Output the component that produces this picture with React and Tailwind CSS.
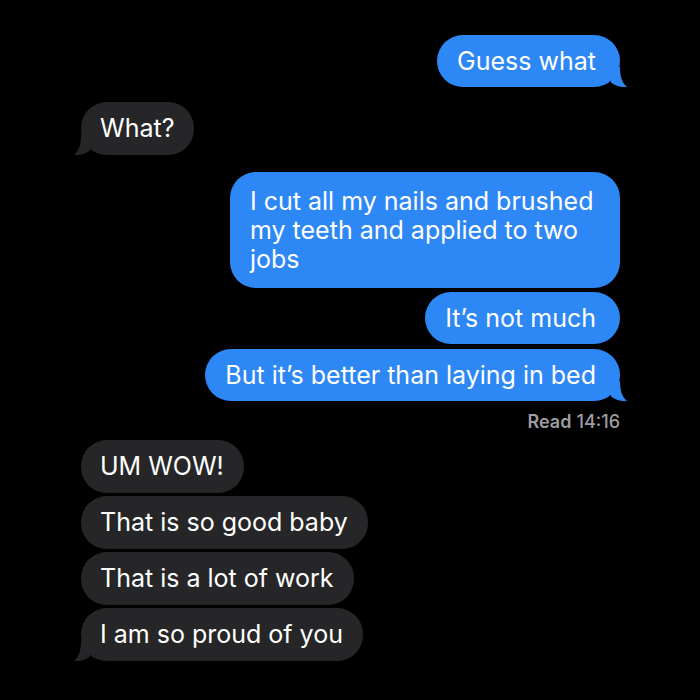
import React from 'react';

const BLUE = '#2d87f5';
const GRAY = '#262628';

const Tail = ({ side, color }) => {
    // little iMessage horn on the bottom corner of the last bubble in a group
    if (side === 'right') {
        return (
            <svg className="absolute bottom-0 -right-[7px]" width="20" height="20" viewBox="0 0 20 20">
                <path d="M13 0 C13 9 15 16 20 20 C14 20.6 9 19 4 15.5 L4 0 Z" fill={color} />
            </svg>
        );
    }
    return (
        <svg className="absolute bottom-0 -left-[7px]" width="20" height="20" viewBox="0 0 20 20">
            <path d="M7 0 C7 9 5 16 0 20 C6 20.6 11 19 16 15.5 L16 0 Z" fill={color} />
        </svg>
    );
};

const Sent = ({ children, tail, className = '' }) => (
    <div className={`relative self-end rounded-[26px] bg-[#2d87f5] pl-[20px] pr-[24px] py-[11.5px] text-white ${className}`}>
        <span className="relative z-10">{children}</span>
        {tail && <Tail side="right" color={BLUE} />}
    </div>
);

const Received = ({ children, tail, className = '' }) => (
    <div className={`relative self-start rounded-[26px] bg-[#262628] pl-[19px] pr-[20px] py-[12px] text-white ${className}`}>
        <span className="relative z-10">{children}</span>
        {tail && <Tail side="left" color={GRAY} />}
    </div>
);

export default function App() {
    return (
        <div
            className="w-[700px] h-[700px] bg-black flex flex-col pl-[81px] pr-[80px] pt-[35px] text-[25px] leading-[29px]"
            style={{ fontFamily: 'Inter, "Liberation Sans", sans-serif' }}
        >
            <Sent tail className="whitespace-nowrap">Guess what</Sent>

            <Received tail className="mt-[15px] whitespace-nowrap">What?</Received>

            <Sent className="mt-[17px] max-w-[390px] py-[14.5px] rounded-[24px]">
                I cut all my nails and brushed my teeth and applied to two jobs
            </Sent>
            <Sent className="mt-[4px] whitespace-nowrap">It’s not much</Sent>
            <Sent tail className="mt-[5px] whitespace-nowrap">But it’s better than laying in bed</Sent>

            <div className="self-end mt-[10px] text-[18px] leading-[22px] text-[#9d9da1]">
                <span className="font-semibold">Read</span> <span className="font-medium">14:16</span>
            </div>

            <Received className="mt-[7px] whitespace-nowrap">UM WOW!</Received>
            <Received className="mt-[3px] whitespace-nowrap">That is so good baby</Received>
            <Received className="mt-[3px] whitespace-nowrap">That is a lot of work</Received>
            <Received tail className="mt-[3px] whitespace-nowrap">I am so proud of you</Received>
        </div>
    );
}
